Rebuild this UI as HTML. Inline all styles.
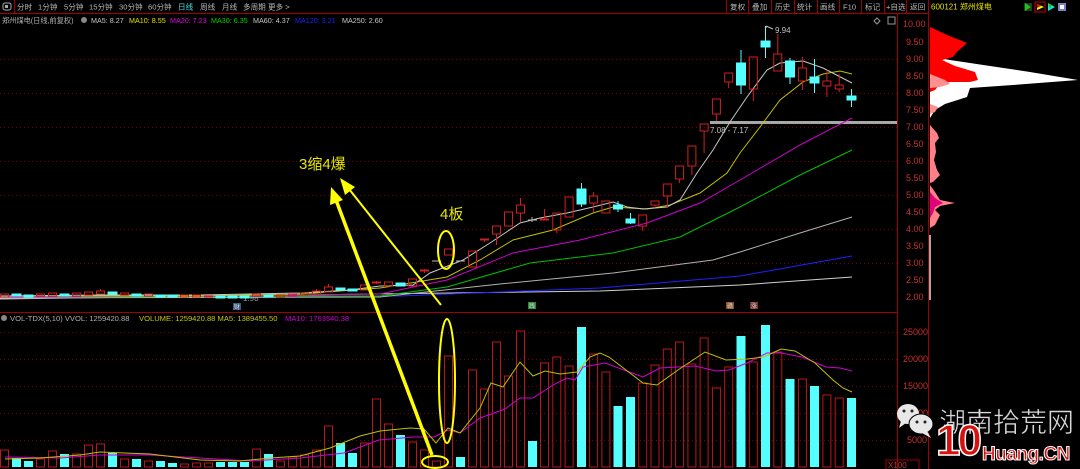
<!DOCTYPE html>
<html><head><meta charset="utf-8"><style>
html,body{margin:0;padding:0;background:#000;width:1080px;height:469px;overflow:hidden}
svg{display:block}
text{font-family:"Liberation Sans","Noto Sans CJK SC",sans-serif}
</style></head><body>
<svg width="1080" height="469" viewBox="0 0 1080 469" xmlns="http://www.w3.org/2000/svg">
<rect width="1080" height="469" fill="#000"/>
<g stroke="#700" stroke-width="1" stroke-dasharray="1,3">
<line x1="0" y1="59.5" x2="897" y2="59.5"/><line x1="0" y1="93.5" x2="897" y2="93.5"/><line x1="0" y1="127.5" x2="897" y2="127.5"/><line x1="0" y1="161.5" x2="897" y2="161.5"/><line x1="0" y1="195.5" x2="897" y2="195.5"/><line x1="0" y1="229.5" x2="897" y2="229.5"/><line x1="0" y1="263.5" x2="897" y2="263.5"/>
<line x1="0" y1="332.5" x2="897" y2="332.5"/><line x1="0" y1="359.5" x2="897" y2="359.5"/><line x1="0" y1="386.5" x2="897" y2="386.5"/><line x1="0" y1="413.5" x2="897" y2="413.5"/><line x1="0" y1="440.5" x2="897" y2="440.5"/>
</g>
<g stroke="#a00000" stroke-width="1">
<line x1="0" y1="13.5" x2="928" y2="13.5"/>
<line x1="14.5" y1="0" x2="14.5" y2="13"/>
<line x1="0" y1="312.5" x2="897" y2="312.5"/>
<line x1="897.5" y1="13" x2="897.5" y2="469"/>
<line x1="928.5" y1="0" x2="928.5" y2="469"/>
<line x1="726.5" y1="0" x2="726.5" y2="13"/><line x1="748.5" y1="0" x2="748.5" y2="13"/><line x1="771.5" y1="0" x2="771.5" y2="13"/><line x1="794.5" y1="0" x2="794.5" y2="13"/><line x1="817.5" y1="0" x2="817.5" y2="13"/><line x1="839.5" y1="0" x2="839.5" y2="13"/><line x1="861.5" y1="0" x2="861.5" y2="13"/><line x1="884.5" y1="0" x2="884.5" y2="13"/><line x1="906.5" y1="0" x2="906.5" y2="13"/>
</g>
<rect x="3" y="3" width="8" height="7" rx="2" fill="none" stroke="#aaa"/><rect x="5" y="5" width="3" height="3" fill="#aaa"/>
<g font-size="7.6" fill="#b8b8b8">
<text x="17" y="9.5">分时</text><text x="38" y="9.5">1分钟</text><text x="64" y="9.5">5分钟</text><text x="89" y="9.5">15分钟</text><text x="119" y="9.5">30分钟</text><text x="148" y="9.5">60分钟</text><text x="178" y="9.5" fill="#40e0e0">日线</text><text x="200" y="9.5">周线</text><text x="222" y="9.5">月线</text><text x="243" y="9.5">多周期</text><text x="268" y="9.5">更多 &gt;</text>
<text x="730" y="9.5">复权</text><text x="752" y="9.5">叠加</text><text x="775" y="9.5">历史</text><text x="797" y="9.5">统计</text><text x="820" y="9.5">画线</text><text x="843" y="9.5">F10</text><text x="865" y="9.5">标记</text><text x="886" y="9.5">+自选</text><text x="910" y="9.5">返回</text>
</g>
<text x="931" y="9.5" font-size="8" fill="#e0e000">600121 郑州煤电</text>
<g><rect x="1024" y="3" width="8" height="8" fill="#204020"/><path d="M1025 3 L1031 7 L1025 11Z" fill="#20c020"/>
<rect x="1035" y="2" width="10" height="10" fill="none" stroke="#c00"/><path d="M1037 4 L1044 7 L1037 10Z" fill="#ff0"/><path d="M1037 4 L1041 6 L1037 8Z" fill="#f00"/>
<path d="M1048 3 L1055 7 L1048 11Z" fill="#20e0e0"/><path d="M1048 3 L1052 5 L1050 9Z" fill="#20c020"/>
<rect x="1058" y="3" width="8" height="8" fill="#8080c0"/><rect x="1060" y="5" width="4" height="4" fill="#fff"/></g>
<g font-size="7.2">
<text x="2" y="23" fill="#b0b0b0">郑州煤电(日线,前复权)</text>
<circle cx="84" cy="20" r="3" fill="#888"/>
<text x="91" y="23" fill="#c8c8c8">MA5: 8.27</text>
<text x="129" y="23" fill="#e0e000">MA10: 8.55</text>
<text x="170" y="23" fill="#e000e0">MA20: 7.23</text>
<text x="211" y="23" fill="#00d000">MA30: 6.35</text>
<text x="253" y="23" fill="#c8c8c8">MA60: 4.37</text>
<text x="295" y="23" fill="#2020ff">MA120: 3.21</text>
<text x="342" y="23" fill="#c8c8c8">MA250: 2.60</text>
</g>
<path d="M877 18 L880 21 L877 24 L874 21Z" fill="none" stroke="#999"/><rect x="888" y="17" width="7" height="7" fill="none" stroke="#999"/>
<g font-size="9" fill="#c83030">
<text x="903" y="27">10.00</text><text x="906" y="45">9.50</text><text x="906" y="62">9.00</text><text x="906" y="79">8.50</text><text x="906" y="96">8.00</text><text x="906" y="113">7.50</text><text x="906" y="130">7.00</text><text x="906" y="147">6.50</text><text x="906" y="164">6.00</text><text x="906" y="181">5.50</text><text x="906" y="198">5.00</text><text x="906" y="215">4.50</text><text x="906" y="232">4.00</text><text x="906" y="249">3.50</text><text x="906" y="266">3.00</text><text x="906" y="283">2.50</text><text x="906" y="300">2.00</text>
<text x="903" y="335">25000</text><text x="903" y="362">20000</text><text x="903" y="389">15000</text><text x="903" y="416">10000</text><text x="907" y="443">5000</text>
</g>
<rect x="886" y="460" width="33" height="10" fill="none" stroke="#a00000"/>
<text x="888" y="468" font-size="8" fill="#c83030">X100</text>
<polygon points="930,56 950,60 990,66 1030,72 1078,80 1013,85 970,88 967,97 945,104 935,110 930,118" fill="#fff"/>
<polygon points="930,27 947,35 967,43 957,52 953,57 942,60 955,66 975,72 978,80 970,82 950,82 940,84 935,90 930,92" fill="#f00"/>
<polygon points="930,74 945,80 950,84 940,87 930,88" fill="#ff9090"/>
<polygon points="930,104 938,107 935,112 930,114" fill="#ff9090"/>
<polygon points="930,125 937,133 939,138 935,143 936,152 934,160 937,170 940,175 933,182 930,183" fill="#ff8088"/>
<polygon points="930,185 935,192 940,200 955,203 940,206 935,210 940,215 935,225 930,228" fill="#ff8088"/>
<polygon points="930,192 935,198 943,203 935,207 933,213 930,218" fill="#e0007a"/>
<line x1="930" y1="235" x2="930" y2="300" stroke="#ddd" stroke-width="1.5"/>
<rect x="710" y="121" width="187" height="3" fill="#a8a8a8"/>
<text x="710" y="133" font-size="8" fill="#c0c0c0">7.08 - 7.17</text>
<text x="775" y="33" font-size="8" fill="#c0c0c0">9.94</text>
<path d="M766 26 L766 28 M766 26 L773 29" stroke="#c0c0c0" fill="none"/>
<text x="243" y="301" font-size="8" fill="#999">1.98</text>
<rect x="233" y="303" width="8" height="7" fill="#3a5a8a"/><text x="234" y="309" font-size="6" fill="#ddd">财</text>
<rect x="528" y="302" width="8" height="7" fill="#2a8a3a"/><text x="529" y="308" font-size="6" fill="#ddd">践</text>
<rect x="726" y="302" width="8" height="7" fill="#8a5020"/><text x="727" y="308" font-size="6" fill="#ddd">赣</text>
<rect x="750" y="302" width="8" height="7" fill="#7a3030"/><text x="751" y="308" font-size="6" fill="#ddd">涨</text>
<g fill="none" stroke-width="1">
<polyline stroke="#d0d0d0" points="0,299 600,291 740,285 852,277"/>
<polyline stroke="#2020ff" points="0,298 400,296 600,288 740,276 852,256"/>
<polyline stroke="#b0b0b0" points="0,298 380,297 500,284 613,273 713,260 740,252 800,233 852,217"/>
<polyline stroke="#00c000" points="0,297 300,296 380,296 447,287 530,263 613,253 680,237 740,207 800,175 852,150"/>
<polyline stroke="#d000d0" points="0,297 300,295 380,294 447,280 513,253 580,240 647,223 700,203 740,180 800,145 852,118"/>
<polyline stroke="#c0c000" points="0,296 200,296 300,294 380,288 447,277 480,260 513,240 553,230 593,213 613,207 647,209 670,205 700,193 727,173 740,153 760,127 780,100 803,82 823,74 840,71 852,74"/>
<polyline stroke="#c8c8c8" points="0,296 100,295 200,295 300,293 350,290 380,286 413,285 430,273 463,260 490,243 520,223 540,218 567,213 593,207 613,202 627,207 643,209 667,207 680,200 697,173 713,150 730,122 747,97 767,70 780,63 803,61 823,68 852,83"/>
</g>
<g stroke="#d02020" fill="none" stroke-width="1">
<rect x="0.5" y="294" width="8" height="3"/><rect x="36.5" y="294" width="8" height="2"/><rect x="48.5" y="293" width="8" height="3"/><rect x="72.5" y="293" width="8" height="3"/><rect x="84.5" y="292" width="8" height="3"/><rect x="96.5" y="291" width="8" height="3"/><rect x="120.5" y="293" width="8" height="2"/><rect x="144.5" y="294" width="8" height="2"/><rect x="180.5" y="295" width="8" height="2"/><rect x="192.5" y="295" width="8" height="2"/><rect x="204.5" y="296" width="8" height="1"/><rect x="252.5" y="294" width="8" height="2"/><rect x="276.5" y="295" width="8" height="2"/><rect x="288.5" y="294" width="8" height="2"/><rect x="300.5" y="293" width="8" height="2"/><rect x="312.5" y="291" width="8" height="3"/><rect x="324.5" y="287" width="8" height="5"/><rect x="360.5" y="285" width="8" height="5"/><rect x="372.5" y="282" width="8" height="1"/><rect x="384.5" y="282" width="8" height="4"/><rect x="408.5" y="279" width="8" height="7"/><rect x="420.5" y="270" width="8" height="1"/><rect x="444.5" y="249" width="8" height="6"/><rect x="468.5" y="251" width="8" height="16"/><rect x="480.5" y="239" width="8" height="1"/><rect x="492.5" y="226" width="8" height="8"/><rect x="504.5" y="212" width="8" height="14"/><rect x="516.5" y="205" width="8" height="8"/><rect x="540.5" y="219" width="8" height="1"/><rect x="552.8" y="213" width="8" height="17"/><rect x="565.1" y="197" width="8" height="20"/><rect x="589.6" y="196" width="8" height="7"/><rect x="601.9" y="201" width="8" height="12"/><rect x="638.7" y="215" width="8" height="11"/><rect x="651" y="201" width="8" height="4"/><rect x="663.3" y="184" width="8" height="12"/><rect x="675.6" y="166" width="8" height="13"/><rect x="687.9" y="146" width="8" height="20"/><rect x="700.1" y="124" width="8" height="7"/><rect x="712.4" y="99" width="8" height="15"/><rect x="724.7" y="73" width="8" height="9"/><rect x="749.3" y="57" width="8" height="32"/><rect x="773.8" y="54" width="8" height="17"/><rect x="798.4" y="68" width="8" height="13"/><rect x="822.9" y="81" width="8" height="5"/><rect x="835.2" y="85" width="8" height="4"/>
<path d="M100.5 289V291M316.5 289V291M328.5 284V287M376.5 281V284M424.5 269V273M484.5 240V242M496.5 234V245M520.5 198V205M520.5 213V222M544.5 209V219M556.8 230V233M593.6 192V196M593.6 203V212M642.7 226V231M655 205V208M667.3 196V207M679.6 179V183M691.9 166V175M704.1 131V153M716.4 114V121M728.7 82V88M753.3 89V101M777.8 34V54M802.4 57V68M802.4 81V90M826.9 70V81M826.9 86V97M839.2 74V85M839.2 89V92"/>
</g>
<g fill="#55ffff" stroke="#55ffff" stroke-width="1">
<rect x="12" y="294" width="9" height="2"/><rect x="24" y="295" width="9" height="2"/><rect x="60" y="294" width="9" height="2"/><rect x="108" y="292" width="9" height="2"/><rect x="132" y="294" width="9" height="2"/><rect x="156" y="295" width="9" height="2"/><rect x="168" y="295" width="9" height="2"/><rect x="216" y="296" width="9" height="2"/><rect x="228" y="296" width="9" height="2"/><rect x="240" y="296" width="9" height="2"/><rect x="264" y="295" width="9" height="2"/><rect x="336" y="288" width="9" height="2"/><rect x="348" y="289" width="9" height="2"/><rect x="396" y="283" width="9" height="3"/>
<rect x="577" y="189" width="9" height="15"/><rect x="613.5" y="205" width="9" height="4"/><rect x="626" y="219" width="9" height="4"/><rect x="736.5" y="63" width="9" height="22"/><rect x="761" y="41" width="9" height="6"/><rect x="785.5" y="61" width="9" height="16"/><rect x="810" y="77" width="9" height="6"/><rect x="847" y="96" width="9" height="4"/>
<path d="M581.5 183V207M618 201V212M630.5 213V224M741 50V94M765.5 26V58M790 58V84M814.5 59V93M851.5 89V107" fill="none"/>
</g>
<path d="M432 261H441M456 261H465M528 220H537M532 217V222" stroke="#bbb"/>
<g stroke="#b81818" fill="none" stroke-width="1">
<rect x="0.5" y="450" width="8" height="17"/><rect x="36.5" y="459" width="8" height="8"/><rect x="48.5" y="451" width="8" height="16"/><rect x="72.5" y="454" width="8" height="13"/><rect x="84.5" y="445" width="8" height="22"/><rect x="96.5" y="444" width="8" height="23"/><rect x="120.5" y="459" width="8" height="8"/><rect x="144.5" y="461" width="8" height="6"/><rect x="180.5" y="464" width="8" height="3"/><rect x="192.5" y="463" width="8" height="4"/><rect x="204.5" y="463" width="8" height="4"/><rect x="252.5" y="449" width="8" height="18"/><rect x="276.5" y="461" width="8" height="6"/><rect x="288.5" y="457" width="8" height="10"/><rect x="300.5" y="455" width="8" height="12"/><rect x="312.5" y="450" width="8" height="17"/><rect x="324.5" y="426" width="8" height="41"/><rect x="360.5" y="443" width="8" height="24"/><rect x="372.5" y="399" width="8" height="68"/><rect x="384.5" y="424" width="8" height="43"/><rect x="408.5" y="442" width="8" height="25"/><rect x="420.5" y="450" width="8" height="17"/><rect x="432.5" y="461" width="8" height="6"/><rect x="444.5" y="356" width="8" height="111"/><rect x="468.5" y="370" width="8" height="97"/><rect x="480.5" y="389" width="8" height="78"/><rect x="492.5" y="342" width="8" height="125"/><rect x="504.5" y="376" width="8" height="91"/><rect x="516.5" y="331" width="8" height="136"/><rect x="540.5" y="363" width="8" height="104"/>
<rect x="552.8" y="357" width="8" height="110"/><rect x="565.1" y="366" width="8" height="101"/><rect x="589.6" y="354" width="8" height="113"/><rect x="601.9" y="372" width="8" height="95"/><rect x="638.7" y="383" width="8" height="84"/><rect x="651" y="365" width="8" height="102"/><rect x="663.3" y="349" width="8" height="118"/><rect x="675.6" y="342" width="8" height="125"/><rect x="687.9" y="364" width="8" height="103"/><rect x="700.1" y="338" width="8" height="129"/><rect x="712.4" y="388" width="8" height="79"/><rect x="724.7" y="367" width="8" height="100"/><rect x="749.3" y="362" width="8" height="105"/><rect x="773.8" y="352" width="8" height="115"/><rect x="798.4" y="379" width="8" height="88"/><rect x="822.9" y="395" width="8" height="72"/><rect x="835.2" y="398" width="8" height="69"/>
</g>
<g fill="#55ffff">
<rect x="12" y="458" width="9" height="9"/><rect x="24" y="461" width="9" height="6"/><rect x="60" y="454" width="9" height="13"/><rect x="108" y="453" width="9" height="14"/><rect x="132" y="459" width="9" height="8"/><rect x="156" y="461" width="9" height="6"/><rect x="168" y="463" width="9" height="4"/><rect x="216" y="462" width="9" height="5"/><rect x="228" y="462" width="9" height="5"/><rect x="240" y="462" width="9" height="5"/><rect x="264" y="454" width="9" height="13"/><rect x="336" y="443" width="9" height="24"/><rect x="348" y="453" width="9" height="14"/><rect x="396" y="435" width="9" height="32"/><rect x="456" y="457" width="9" height="10"/><rect x="528" y="441" width="9" height="26"/>
<rect x="577" y="327" width="9" height="140"/><rect x="613.5" y="406" width="9" height="61"/><rect x="626" y="397" width="9" height="70"/><rect x="736.5" y="336" width="9" height="131"/><rect x="761" y="325" width="9" height="142"/><rect x="785.5" y="379" width="9" height="88"/><rect x="810" y="386" width="9" height="81"/><rect x="847" y="398" width="9" height="69"/>
</g>
<g fill="none" stroke-width="1">
<polyline stroke="#d000d0" points="5,457 60,458 100,455 150,455 200,458 250,461 300,458 344,453 379,440 413,437 434,437 448,430 460,433 480,418 505,409 520,398 533,398 553,385 567,378 575,380 583,367 605,363 643,377 660,368 695,366 716,371 729,370 747,363 767,353 781,353 802,357 826,367 840,368 852,371"/>
<polyline stroke="#c0c000" points="5,459 40,458 80,455 100,452 150,454 200,460 240,461 270,458 300,456 330,448 360,436 380,431 410,428 424,429 436,443 448,428 460,433 480,408 491,383 503,387 520,362 533,376 545,371 560,374 577,372 590,357 600,353 609,357 626,370 643,383 657,385 678,370 705,352 726,360 747,359 764,357 781,349 795,351 815,363 833,380 843,388 852,392"/>
</g>
<circle cx="4" cy="318" r="3" fill="#888"/>
<g font-size="7.6">
<text x="10" y="321" fill="#b0b0b0">VOL-TDX(5,10) VVOL: 1259420.88</text>
<text x="139" y="321" fill="#c8c800">VOLUME: 1259420.88 MA5: 1389455.50</text>
<text x="285" y="321" fill="#d000d0">MA10: 1763540.38</text>
</g>
<g stroke="#ffff00" fill="none">
<line x1="432" y1="455" x2="336" y2="200" stroke-width="3.5"/>
<line x1="441" y1="305" x2="349" y2="189" stroke-width="2"/>
<ellipse cx="446" cy="250" rx="8" ry="19" stroke-width="2"/>
<ellipse cx="447" cy="381" rx="8" ry="62" stroke-width="2"/>
<ellipse cx="435" cy="462" rx="13" ry="6" stroke-width="2"/>
</g>
<polygon points="331,187 343,200 330,205" fill="#ffff00"/>
<polygon points="340,178 355,187 345,195" fill="#ffff00"/>
<text x="299" y="169" font-size="15" fill="#e8e800">3缩4爆</text>
<text x="440" y="219" font-size="15" fill="#e8e800">4板</text>
<g>
<ellipse cx="908" cy="414" rx="11" ry="10" fill="#e8e8e8"/><path d="M901 421 L899 428 L906 423Z" fill="#e8e8e8"/>
<circle cx="904" cy="411" r="1.5" fill="#222"/><circle cx="912" cy="411" r="1.5" fill="#222"/>
<ellipse cx="921" cy="424" rx="12" ry="10" fill="#e8e8e8" stroke="#000" stroke-width="1"/><path d="M927 431 L931 438 L922 433Z" fill="#e8e8e8"/>
<circle cx="917" cy="422" r="1.5" fill="#222"/><circle cx="925" cy="422" r="1.5" fill="#222"/>
</g>
<text x="939" y="432" font-size="27" fill="#d8d8d8" stroke="#000" stroke-width="0.5">湖南拾荒网</text>
<text x="936" y="455" font-size="44" font-weight="bold" fill="#d81010" stroke="#fff" stroke-width="1.5" letter-spacing="-3">10</text>
<text x="982" y="460" font-size="19" font-weight="bold" fill="#d81010" stroke="#fff" stroke-width="1" letter-spacing="-0.5">Huang.CN</text>
</svg>
</body></html>
